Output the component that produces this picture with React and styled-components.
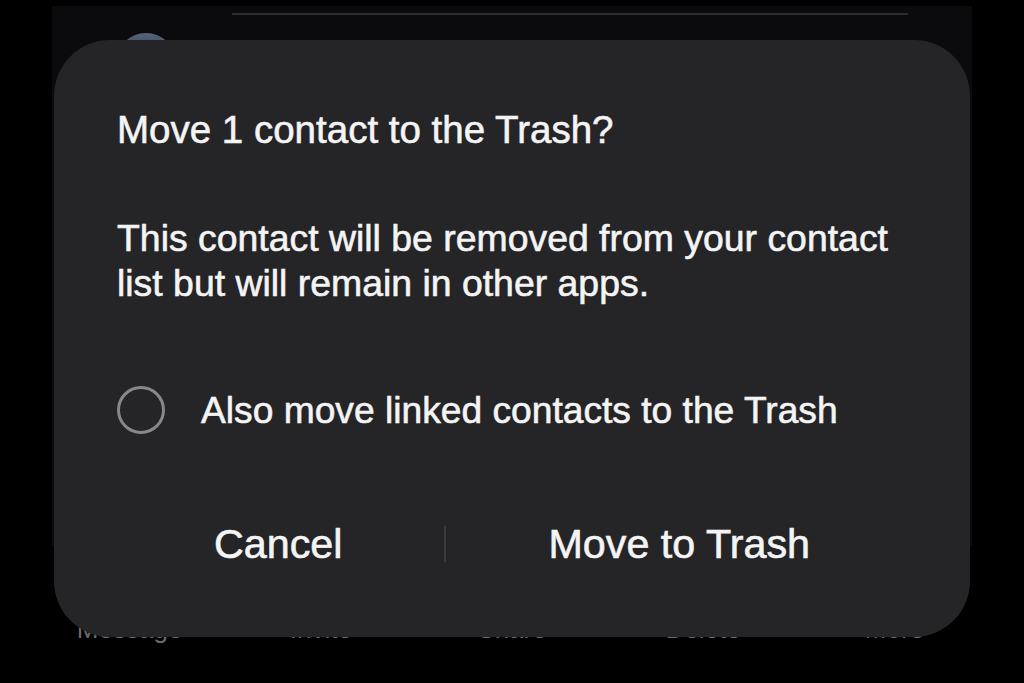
import React from "react";
import styled, { createGlobalStyle } from "styled-components";

const Global = createGlobalStyle`
  html, body { margin: 0; padding: 0; background: #000; }
  body { width: 1024px; height: 683px; overflow: hidden; font-family: "Liberation Sans", Arial, sans-serif; }
`;

const Screen = styled.div`
  position: relative;
  width: 1024px;
  height: 683px;
  background: #000;
  display: flex;
  flex-direction: column;
  overflow: hidden;
`;

const AppPanel = styled.div`
  margin: 6px 52px 0;
  height: 540px;
  background: #0b0b0d;
  display: flex;
  flex-direction: column;
`;

const TopRule = styled.div`
  height: 2px;
  margin: 7px 64px 0 180px;
  background: #2c2c2f;
`;

const Avatar = styled.div`
  width: 60px;
  height: 60px;
  border-radius: 50%;
  margin: 18px 0 0 64px;
  background: linear-gradient(180deg, #56627a 0%, #3a4250 40%, #2c323c 100%);
`;

const BottomBar = styled.div`
  margin: 68px 34px 0;
  display: grid;
  grid-template-columns: repeat(5, 1fr);
`;

const BarLabel = styled.div`
  text-align: center;
  font-size: 26px;
  line-height: 30px;
  color: #6a6a6c;
`;

const Dialog = styled.div`
  position: absolute;
  left: 54px;
  top: 40px;
  width: 916px;
  height: 597px;
  box-sizing: border-box;
  border-radius: 56px;
  background: #252527;
  padding: 68px 63px 0;
  display: flex;
  flex-direction: column;
  color: #f4f4f4;
  -webkit-text-stroke: 0.6px #f4f4f4;
`;

const Title = styled.div`
  font-size: 38.5px;
  line-height: 44px;
`;

const Body = styled.div`
  margin-top: 64px;
  font-size: 37.4px;
  line-height: 45px;
`;

const RadioRow = styled.div`
  margin-top: 79px;
  height: 50px;
  display: flex;
  align-items: center;
  gap: 36px;
`;

const RadioCircle = styled.div`
  width: 48px;
  height: 48px;
  box-sizing: border-box;
  border-radius: 50%;
  border: 3px solid #88888a;
  flex: none;
`;

const RadioText = styled.div`
  font-size: 37.2px;
  line-height: 45px;
`;

const ButtonRow = styled.div`
  margin: 85px -5px 0;
  height: 48px;
  display: flex;
  align-items: center;
`;

const DialogButton = styled.div`
  flex: 1 1 auto;
  text-align: center;
  font-size: 41.3px;
  line-height: 48px;
  white-space: nowrap;
`;

const Divider = styled.div`
  width: 2px;
  height: 36px;
  flex: none;
  background: #3b3b3e;
`;

export default function App() {
  return (
    <>
      <Global />
      <Screen>
        <AppPanel>
          <TopRule />
          <Avatar />
        </AppPanel>
        <BottomBar>
          {["Message", "Invite", "Share", "Delete", "More"].map((l) => (
            <BarLabel key={l}>{l}</BarLabel>
          ))}
        </BottomBar>
        <Dialog role="dialog">
          <Title>Move 1 contact to the Trash?</Title>
          <Body>
            This contact will be removed from your contact list but will remain in other apps.
          </Body>
          <RadioRow>
            <RadioCircle />
            <RadioText>Also move linked contacts to the Trash</RadioText>
          </RadioRow>
          <ButtonRow>
            <DialogButton>Cancel</DialogButton>
            <Divider />
            <DialogButton>Move to Trash</DialogButton>
          </ButtonRow>
        </Dialog>
      </Screen>
    </>
  );
}
